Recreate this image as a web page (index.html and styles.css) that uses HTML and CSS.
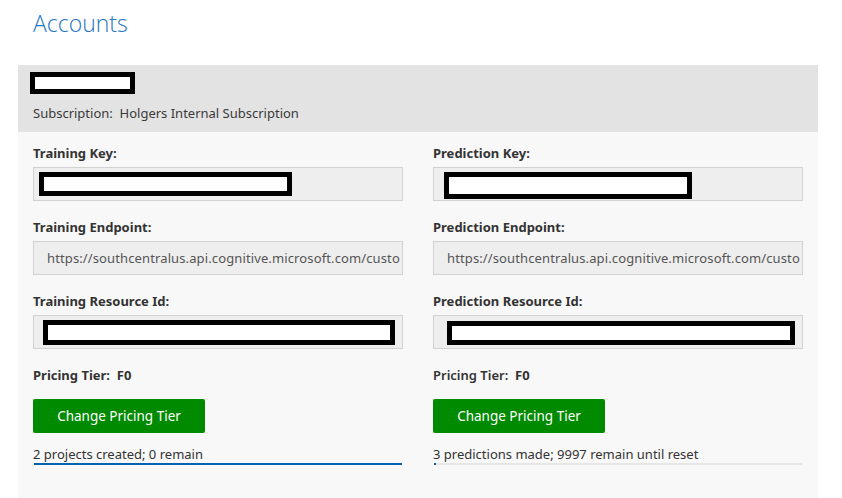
FILE: index.html
```html
<!DOCTYPE html>
<html>
<head>
<meta charset="utf-8">
<link rel="stylesheet" href="styles.css">
</head>
<body>
<div class="page">
  <h1 class="title">Accounts</h1>
  <div class="panel">
    <div class="panel-head">
      <div class="redact redact-head"></div>
      <div class="sub">Subscription:&nbsp; Holgers Internal Subscription</div>
    </div>
    <div class="panel-body">
      <div class="col">
        <div class="label">Training Key:</div>
        <div class="field"><div class="redact r-key-l"></div></div>
        <div class="label">Training Endpoint:</div>
        <div class="field text"><span class="url">https://southcentralus.api.cognitive.microsoft.com/custo</span></div>
        <div class="label">Training Resource Id:</div>
        <div class="field"><div class="redact r-res-l"></div></div>
        <div class="tier">Pricing Tier:&nbsp; F0</div>
        <div class="btn">Change Pricing Tier</div>
        <div class="usage">2 projects created; 0 remain</div>
        <div class="bar"><div class="fill" style="width:100%"></div></div>
      </div>
      <div class="col">
        <div class="label">Prediction Key:</div>
        <div class="field"><div class="redact r-key-r"></div></div>
        <div class="label">Prediction Endpoint:</div>
        <div class="field text"><span class="url">https://southcentralus.api.cognitive.microsoft.com/custo</span></div>
        <div class="label">Prediction Resource Id:</div>
        <div class="field"><div class="redact r-res-r"></div></div>
        <div class="tier"><span class="semi">Pricing Tier:</span>&nbsp; F0</div>
        <div class="btn">Change Pricing Tier</div>
        <div class="usage">3 predictions made; 9997 remain until reset</div>
        <div class="bar"><div class="fill" style="width:0.6%"></div></div>
      </div>
    </div>
  </div>
</div>
</body>
</html>
```
FILE: styles.css
```css
html, body {
  margin: 0;
  padding: 0;
  background: #ffffff;
}
body {
  font-family: "Noto Sans", "Open Sans", sans-serif;
  font-size: 13px;
  color: #333333;
}
.page {
  padding: 0 24px 0 18px;
}
.title {
  margin: 0;
  padding: 8px 0 0 15px;
  height: 65px;
  box-sizing: border-box;
  font-family: "Open Sans", "Noto Sans", sans-serif;
  font-weight: 300;
  font-size: 23px;
  line-height: 30px;
  color: #1f76c4;
}
.panel {
  width: 800px;
  background: #f8f8f8;
  height: 440px;
}
.panel-head {
  background: #e3e3e3;
  height: 67px;
  box-sizing: border-box;
  padding: 7px 15px 0 12px;
}
.redact {
  box-sizing: border-box;
  border: 5px solid #000;
  background: #fff;
}
.redact-head {
  width: 105px;
  height: 22px;
}
.sub {
  margin-top: 10px;
  padding-left: 3px;
  line-height: 18px;
  color: #3a3a3a;
}
.panel-body {
  display: flex;
  gap: 30px;
  padding: 12px 15px 0 15px;
}
.col {
  width: 370px;
  display: flex;
  flex-direction: column;
}
.label {
  font-weight: 700;
  line-height: 18px;
  color: #333;
  margin-bottom: 5px;
}
.field {
  box-sizing: border-box;
  height: 34px;
  background: #eeeeee;
  border: 1px solid #d2d2d2;
  margin-bottom: 17px;
  padding: 4px 5px;
}
.field.text {
  padding: 0 2px 0 13px;
  line-height: 32px;
  white-space: nowrap;
  overflow: hidden;
  color: #555;
}
.url {
  letter-spacing: 0.12px;
}
.r-key-l { width: 253px; height: 24px; }
.r-key-r { width: 248px; height: 27px; margin-left: 5px; }
.r-res-l { width: 352px; height: 25px; margin-left: 4px; }
.r-res-r { width: 348px; height: 24px; margin-left: 8px; margin-top: 1px; }
.tier {
  font-weight: 700;
  line-height: 18px;
  margin-bottom: 15px;
}
.semi {
  font-weight: 600;
}
.btn {
  width: 172px;
  height: 34px;
  background: #008a00;
  color: #fff;
  font-size: 13.5px;
  line-height: 34px;
  text-align: center;
  border-radius: 2px;
  margin-bottom: 12px;
}
.usage {
  line-height: 18px;
  color: #333;
}
.bar {
  height: 2px;
  background: #e6e6e6;
  margin-left: 1px;
  width: 368px;
}
.fill {
  height: 100%;
  background: #0063b1;
}
```
